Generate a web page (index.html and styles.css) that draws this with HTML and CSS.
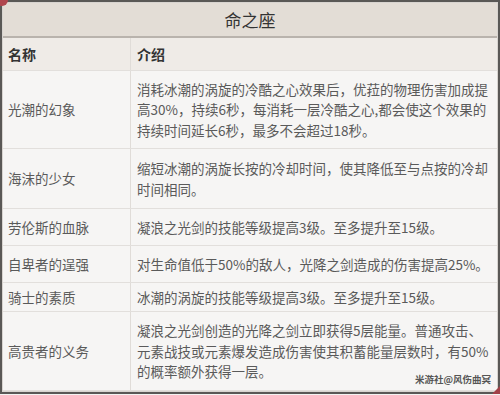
FILE: index.html
```html
<!DOCTYPE html>
<html lang="zh">
<head>
<meta charset="utf-8">
<link rel="stylesheet" href="styles.css">
</head>
<body>
<div class="frame">
  <div class="inner">
    <div class="title">命之座</div>
    <div class="row head">
      <div class="name">名称</div>
      <div class="desc">介绍</div>
    </div>
    <div class="row r1">
      <div class="name">光潮的幻象</div>
      <div class="desc">消耗冰潮的涡旋的冷酷之心效果后，优菈的物理伤害加成提<br>高30%，持续6秒，每消耗一层冷酷之心,都会使这个效果的<br>持续时间延长6秒，最多不会超过18秒。</div>
    </div>
    <div class="row r2">
      <div class="name">海沫的少女</div>
      <div class="desc">缩短冰潮的涡旋长按的冷却时间，使其降低至与点按的冷却<br>时间相同。</div>
    </div>
    <div class="row r3">
      <div class="name">劳伦斯的血脉</div>
      <div class="desc">凝浪之光剑的技能等级提高3级。至多提升至15级。</div>
    </div>
    <div class="row r4">
      <div class="name">自卑者的逞强</div>
      <div class="desc">对生命值低于50%的敌人，光降之剑造成的伤害提高25%。</div>
    </div>
    <div class="row r5">
      <div class="name">骑士的素质</div>
      <div class="desc">冰潮的涡旋的技能等级提高3级。至多提升至15级。</div>
    </div>
    <div class="row r6">
      <div class="name">高贵者的义务</div>
      <div class="desc">凝浪之光剑创造的光降之剑立即获得5层能量。普通攻击、<br>元素战技或元素爆发造成伤害使其积蓄能量层数时，有50%<br>的概率额外获得一层。</div>
    </div>
  </div>
  <div class="mark">米游社@风伤曲冥</div>
  <div class="dot"></div>
  <div class="tri"></div>
</div>
</body>
</html>
```
FILE: styles.css
```css
html, body {
  margin: 0;
  padding: 0;
  background: #f4f3f2;
}
body {
  width: 500px;
  height: 395px;
  overflow: hidden;
  font-family: "Noto Sans CJK SC", "Noto Sans", sans-serif;
}
.frame {
  position: relative;
  box-sizing: border-box;
  width: 500px;
  height: 394px;
  border: 2px solid #5a5856;
  background: #f6f5f4;
}
.inner {
  box-sizing: border-box;
  height: 100%;
  border: 1px solid #d8d4d0;
  display: flex;
  flex-direction: column;
}
.title {
  height: 33px;
  background: #e3ddd6;
  border-bottom: 2px solid #b9b3ad;
  text-align: center;
  font-size: 17px;
  line-height: 33px;
  color: #333;
}
.row {
  display: flex;
  border-bottom: 1px solid #e2dfdc;
  color: #5a5a5a;
  font-size: 13.5px;
  line-height: 20.5px;
}
.row .name {
  width: 122px;
  padding-left: 5px;
  border-right: 1px solid #e0dcd8;
  display: flex;
  align-items: center;
  flex-shrink: 0;
}
.row .desc {
  padding-left: 6px;
  display: flex;
  align-items: center;
  white-space: nowrap;
}
.head {
  height: 32px;
  background: #efebe7;
  color: #333;
  font-weight: bold;
  font-size: 14px;
}
.r1 { height: 77px; }
.r2 { height: 59px; }
.r3 { height: 36px; }
.r4 { height: 36px; }
.r5 { height: 28px; }
.r6 { height: 78px; }
.mark {
  position: absolute;
  right: 7px;
  bottom: 6px;
  font-size: 9.5px;
  color: #555;
  font-weight: bold;
}
.dot {
  position: absolute;
  left: -6px;
  top: -8px;
  width: 12px;
  height: 12px;
  border-radius: 50%;
  background: #b0464e;
}
.tri {
  position: absolute;
  right: -2px;
  bottom: -2px;
  width: 0;
  height: 0;
  border-left: 8px solid transparent;
  border-bottom: 8px solid #a24048;
}
```
